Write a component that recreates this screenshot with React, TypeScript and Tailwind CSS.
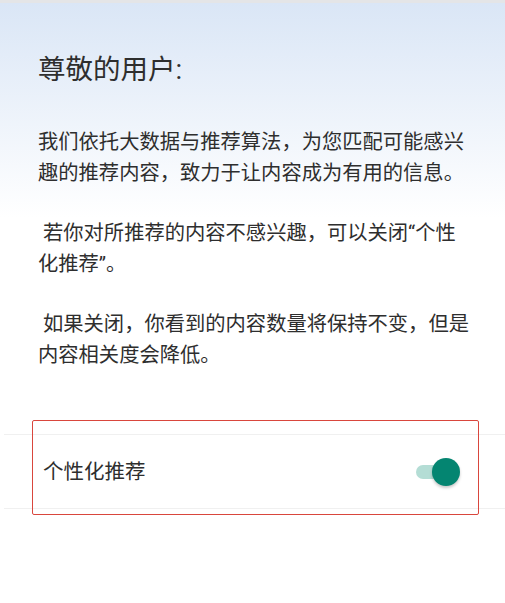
import * as React from "react";

const font = { fontFamily: 'Roboto, "Noto Sans CJK SC", sans-serif' };

const paragraphs = [
  ["我们依托大数据与推荐算法，为您匹配可能感兴", "趣的推荐内容，致力于让内容成为有用的信息。"],
  ["\u00a0若你对所推荐的内容不感兴趣，可以关闭“个性", "化推荐”。"],
  ["\u00a0如果关闭，你看到的内容数量将保持不变，但是", "内容相关度会降低。"],
];

function Toggle({ on }: { on: boolean }) {
  return (
    <div className="relative h-[14px] w-[40px] rounded-full bg-[#b4ddd5]">
      <div
        className={
          "absolute top-[-7px] h-[28px] w-[28px] rounded-full shadow-[0_2px_3px_rgba(0,0,0,0.22)] " +
          (on ? "left-[16px] bg-[#048571]" : "left-[-4px] bg-white")
        }
      />
    </div>
  );
}

export default function App() {
  const [on, setOn] = React.useState(true);

  return (
    <div className="min-h-[603px] w-[505px] bg-white text-[#2e2e2e]" style={font}>
      <div className="h-[3px] bg-[#e4e5e7]" />
      <div className="bg-[linear-gradient(to_bottom,#dae6f6,#ffffff_215px)] pl-[38px] pt-[49px]">
        <h1 className="text-[27.5px] leading-[36px] font-normal">尊敬的用户:</h1>
        <div className="mt-[39px] flex flex-col gap-[30px] text-[20.3px] leading-[30.5px]">
          {paragraphs.map((p, i) => (
            <p key={i} className="whitespace-nowrap">
              {p[0]}
              <br />
              {p[1]}
            </p>
          ))}
        </div>
      </div>

      <div className="relative mt-[64px] ml-[4px] flex h-[75px] items-center justify-between border-y border-[#f0f0f0] pl-[39px] pr-[45px]">
        <span className="text-[20.5px] leading-[28px]">个性化推荐</span>
        <button onClick={() => setOn(!on)} className="mr-[4px]">
          <Toggle on={on} />
        </button>
        <div className="pointer-events-none absolute left-[28px] top-[-15px] h-[95px] w-[447px] rounded-[2px] border-[1.5px] border-[#d9463d]" />
      </div>
    </div>
  );
}
